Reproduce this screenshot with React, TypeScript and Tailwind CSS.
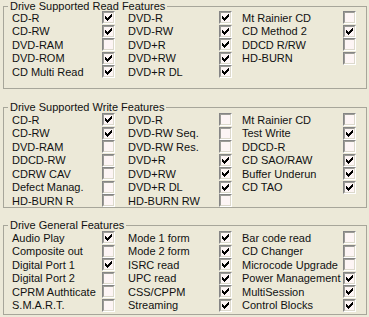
import React from 'react';

type Cell = [string, boolean] | null;

const readRows: Cell[][] = [
  [['CD-R', true], ['DVD-R', true], ['Mt Rainier CD', false]],
  [['CD-RW', true], ['DVD-RW', true], ['CD Method 2', true]],
  [['DVD-RAM', false], ['DVD+R', true], ['DDCD R/RW', false]],
  [['DVD-ROM', true], ['DVD+RW', true], ['HD-BURN', false]],
  [['CD Multi Read', true], ['DVD+R DL', true], null],
];

const writeRows: Cell[][] = [
  [['CD-R', true], ['DVD-R', false], ['Mt Rainier CD', false]],
  [['CD-RW', true], ['DVD-RW Seq.', false], ['Test Write', true]],
  [['DVD-RAM', false], ['DVD-RW Res.', false], ['DDCD-R', false]],
  [['DDCD-RW', false], ['DVD+R', true], ['CD SAO/RAW', true]],
  [['CDRW CAV', false], ['DVD+RW', true], ['Buffer Underun', true]],
  [['Defect Manag.', false], ['DVD+R DL', true], ['CD TAO', true]],
  [['HD-BURN R', false], ['HD-BURN RW', false], null],
];

const generalRows: Cell[][] = [
  [['Audio Play', true], ['Mode 1 form', true], ['Bar code read', false]],
  [['Composite out', false], ['Mode 2 form', true], ['CD Changer', false]],
  [['Digital Port 1', true], ['ISRC read', true], ['Microcode Upgrade', false]],
  [['Digital Port 2', false], ['UPC read', true], ['Power Management', true]],
  [['CPRM Authticate', false], ['CSS/CPPM', true], ['MultiSession', true]],
  [['S.M.A.R.T.', false], ['Streaming', true], ['Control Blocks', true]],
];

// classic 7x7 check glyph, one 1x3 column per x
const checkCols = [2, 3, 4, 3, 2, 1, 0];

const CheckBox: React.FC<{ checked: boolean }> = ({ checked }) => (
  <div className="w-[13px] h-[13px] border-t border-l border-[#858585] border-r border-b border-r-[#ffffff] border-b-[#ffffff] flex">
    <div className="flex-1 border-t border-l border-[#9c9c96] border-r border-b border-r-[#dcd9cc] border-b-[#dcd9cc] bg-[#fdf5f5]">
      {checked && (
        <svg width="9" height="9" viewBox="0 0 9 9" className="block" shapeRendering="crispEdges">
          {checkCols.map((y, i) => (
            <rect key={i} x={i + 1} y={y + 1} width="1" height="3" fill="#000" />
          ))}
        </svg>
      )}
    </div>
  </div>
);

const Group: React.FC<{ title: string; rows: Cell[][]; className: string; gridClass?: string }> = ({
  title,
  rows,
  className,
  gridClass = '',
}) => (
  <fieldset className={`border border-[#a7a69a] w-[364px] ${className}`}>
    <legend className="ml-[4px] px-[2px] leading-[12px] h-[12px]">{title}</legend>
    <div className={`grid grid-cols-[90px_26px_91px_23px_101px_13px] auto-rows-[13.5px] pl-[8px] ${gridClass}`}>
      {rows.map((row, r) =>
        row.map((cell, c) =>
          cell ? (
            <React.Fragment key={`${r}-${c}`}>
              <div className="flex items-center whitespace-nowrap">{cell[0]}</div>
              <div className="flex items-center">
                <CheckBox checked={cell[1]} />
              </div>
            </React.Fragment>
          ) : (
            <React.Fragment key={`${r}-${c}`}>
              <div />
              <div />
            </React.Fragment>
          )
        )
      )}
    </div>
  </fieldset>
);

export default function App() {
  return (
    <div
      className="w-[369px] h-[317px] bg-[#ece9d8] pl-[3px] text-[11px] text-[#111] overflow-hidden flex flex-col"
      style={{ fontFamily: '"Liberation Sans", Arial, sans-serif' }}
    >
      <Group title="Drive Supported Read Features" rows={readRows} className="h-[89px]" gridClass="-mt-[1px]" />
      <Group title="Drive Supported Write Features" rows={writeRows} className="h-[107px] mt-[12px]" />
      <Group title="Drive General Features" rows={generalRows} className="h-[96px] mt-[11px]" />
    </div>
  );
}
